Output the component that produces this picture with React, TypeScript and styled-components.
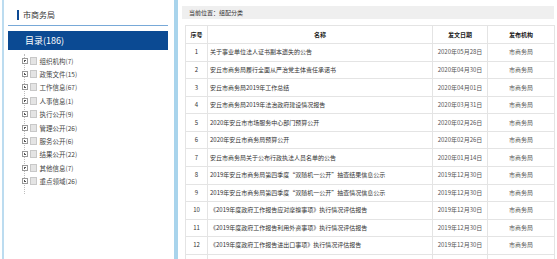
import React from "react";
import styled, { createGlobalStyle } from "styled-components";

const GlobalStyle = createGlobalStyle`
  html, body { margin: 0; padding: 0; background: #fff; }
  body { font-family: "Noto Sans CJK SC", "Noto Sans", sans-serif; color: #333; }
`;

const Page = styled.div`
  display: flex;
  height: 259px;
  width: 557px;
  overflow: hidden;
`;

const LeftEdge = styled.div`
  width: 2px;
  margin-left: 2px;
  background: #bcdcf0;
  flex-shrink: 0;
`;

const Sidebar = styled.div`
  width: 160px;
  margin-left: 4px;
  display: flex;
  flex-direction: column;
  flex-shrink: 0;
`;

const SideTitle = styled.div`
  height: 21px;
  padding-top: 4px;
  padding-left: 9px;
  border-bottom: 1px solid #78a9d8;
  display: flex;
  align-items: center;
  font-size: 8px;
  color: #333;
`;

const TitleBar = styled.span`
  width: 2px;
  height: 10px;
  background: #0d4a94;
  margin-right: 4px;
`;

const CatalogBar = styled.div`
  margin-top: 5px;
  height: 19px;
  background: #0b4a93;
  color: #fff;
  font-size: 9px;
  display: flex;
  align-items: center;
  padding-left: 17px;
`;

const TreeList = styled.ul`
  list-style: none;
  margin: 4px 0 0 16px;
  padding: 0 0 6px 0;
  width: 130px;
  border-left: 1px dotted #bdbdbd;
`;

const TreeItem = styled.li`
  height: 13.4px;
  display: flex;
  align-items: center;
  margin-left: -3.5px;
  font-size: 6.5px;
  color: #444;
  white-space: nowrap;
`;

const PlusBox = styled.span`
  width: 4px;
  height: 4px;
  border: 1px solid #9a9a9a;
  background: #fff;
  position: relative;
  flex-shrink: 0;
  &::before {
    content: "";
    position: absolute;
    left: 1px;
    top: 1.5px;
    width: 2px;
    height: 1px;
    background: #555;
  }
  &::after {
    content: "";
    position: absolute;
    left: 1.5px;
    top: 1px;
    width: 1px;
    height: 2px;
    background: #555;
  }
`;

const DocIcon = styled.span`
  width: 5px;
  height: 6px;
  margin-left: 2px;
  background: #e4e4e4;
  border: 0.5px solid #c8c8c8;
  flex-shrink: 0;
`;

const TreeLabel = styled.span`
  margin-left: 3px;
`;

const Separator = styled.div`
  width: 4px;
  margin-left: 6px;
  background: #a9d4ec;
  flex-shrink: 0;
`;

const Main = styled.div`
  margin-left: 4px;
  width: 372px;
  padding-top: 6px;
  flex-shrink: 0;
`;

const Breadcrumb = styled.div`
  height: 13px;
  line-height: 13px;
  background: #efefef;
  font-size: 6px;
  color: #333;
  padding-left: 7px;
`;

const Table = styled.table`
  margin-top: 6px;
  margin-left: 3px;
  width: 369px;
  border-collapse: collapse;
  table-layout: fixed;
`;

const Th = styled.th`
  border: 1px solid #e4e4e4;
  height: 17.2px;
  padding: 0;
  font-size: 6px;
  font-weight: bold;
  color: #222;
  text-align: center;
`;

const Td = styled.td<{ $align?: "left" | "center"; $muted?: boolean }>`
  border: 1px solid #e4e4e4;
  height: 16.55px;
  padding: 0 0 0 ${(p) => (p.$align === "left" ? "2px" : "0")};
  font-size: 6px;
  line-height: 8px;
  color: ${(p) => (p.$muted ? "#555" : "#333")};
  text-align: ${(p) => p.$align ?? "center"};
  white-space: nowrap;
  overflow: hidden;
`;

const tree = [
  "组织机构(7)",
  "政策文件(15)",
  "工作信息(67)",
  "人事信息(1)",
  "执行公开(9)",
  "管理公开(26)",
  "服务公开(6)",
  "结果公开(22)",
  "其他信息(7)",
  "重点领域(26)",
];

const rows: [string, string][] = [
  ["关于事业单位法人证书副本遗失的公告", "2020年05月28日"],
  ["安丘市商务局履行全面从严治党主体责任承诺书", "2020年04月30日"],
  ["安丘市商务局2019年工作总结", "2020年04月01日"],
  ["安丘市商务局2019年法治政府建设情况报告", "2020年03月31日"],
  ["2020年安丘市市场服务中心部门预算公开", "2020年02月26日"],
  ["2020年安丘市商务局预算公开", "2020年02月26日"],
  ["安丘市商务局关于公布行政执法人员名单的公告", "2020年01月14日"],
  ["2019年安丘市商务局第四季度“双随机一公开”抽查结果信息公示", "2019年12月30日"],
  ["2019年安丘市商务局第四季度“双随机一公开”抽查情况信息公示", "2019年12月30日"],
  ["《2019年度政府工作报告应对摩擦事项》执行情况评估报告", "2019年12月30日"],
  ["《2019年度政府工作报告利用外资事项》执行情况评估报告", "2019年12月30日"],
  ["《2019年度政府工作报告进出口事项》执行情况评估报告", "2019年12月30日"],
];

export default function App() {
  return (
    <>
      <GlobalStyle />
      <Page>
        <LeftEdge />
        <Sidebar>
          <SideTitle>
            <TitleBar />
            市商务局
          </SideTitle>
          <CatalogBar>目录(186)</CatalogBar>
          <TreeList>
            {tree.map((t) => (
              <TreeItem key={t}>
                <PlusBox />
                <DocIcon />
                <TreeLabel>{t}</TreeLabel>
              </TreeItem>
            ))}
          </TreeList>
        </Sidebar>
        <Separator />
        <Main>
          <Breadcrumb>当前位置：组配分类</Breadcrumb>
          <Table>
            <colgroup>
              <col style={{ width: 22 }} />
              <col style={{ width: 225 }} />
              <col style={{ width: 55 }} />
              <col style={{ width: 67 }} />
            </colgroup>
            <thead>
              <tr>
                <Th>序号</Th>
                <Th>名称</Th>
                <Th>发文日期</Th>
                <Th>发布机构</Th>
              </tr>
            </thead>
            <tbody>
              {rows.map(([name, date], i) => (
                <tr key={i}>
                  <Td>{i + 1}</Td>
                  <Td $align="left">{name}</Td>
                  <Td $muted>{date}</Td>
                  <Td $muted>市商务局</Td>
                </tr>
              ))}
              <tr>
                <Td />
                <Td $align="left" />
                <Td $muted />
                <Td $muted />
              </tr>
            </tbody>
          </Table>
        </Main>
      </Page>
    </>
  );
}
